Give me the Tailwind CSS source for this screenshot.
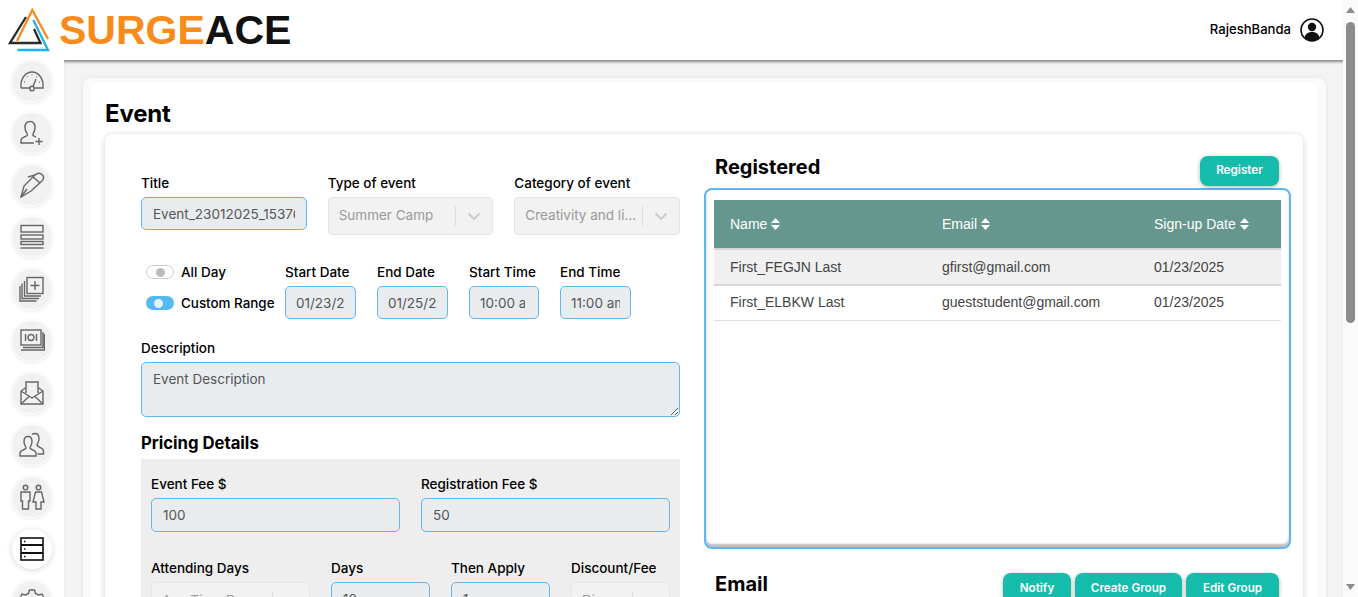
<!DOCTYPE html>
<html lang="en">
<head>
    <meta charset="UTF-8">
    <meta name="viewport" content="width=device-width, initial-scale=1.0">
    <title>Event</title>
    <script src="https://cdn.jsdelivr.net/npm/@tailwindcss/browser@4"></script>
</head>
<body class="h-[597px] overflow-hidden bg-white font-['Inter',sans-serif] text-black">
<div class="flex h-[597px]">
    <div class="flex w-[1343px] flex-col">
        <!-- Header -->
        <header class="flex h-[60px] shrink-0 items-center justify-between bg-white pl-[8px] pr-[19px]">
            <div class="flex items-center">
                <svg class="h-[44px] w-[51px]" viewBox="0 0 51 44" fill="none" stroke-width="2.3">
                    <path d="M18 9 L2 35 H32.5 L26 21" stroke="#2b2b2b"/>
                    <path d="M9 33 L24.3 2 L40 31" stroke="#f98b1a"/>
                    <path d="M25.3 12 L40 42 H9.5" stroke="#1fb1ee"/>
                </svg>
                <div class="font-['Liberation_Sans',sans-serif] text-[41px] font-bold leading-none"><span class="text-[#f98b1a]">SURGE</span><span class="text-[#111]">ACE</span></div>
            </div>
            <div class="flex items-center gap-[9px]">
                <span class="text-[13.1px] font-medium">RajeshBanda</span>
                <svg class="h-[24px] w-[24px]" viewBox="0 0 24 24">
                    <circle cx="12" cy="12" r="11" fill="#fff" stroke="#111" stroke-width="1.6"/>
                    <circle cx="12" cy="9" r="4.2" fill="#111"/>
                    <path d="M4.5 19.5 C5.5 15.5 8.5 14 12 14 C15.5 14 18.5 15.5 19.5 19.5 C17.5 21.8 15 23 12 23 C9 23 6.5 21.8 4.5 19.5Z" fill="#111"/>
                </svg>
            </div>
        </header>

        <div class="flex min-h-0 flex-1">
            <!-- Sidebar -->
            <nav class="flex w-[64px] shrink-0 flex-col items-center gap-[12px] bg-white pr-[1px] pt-[1px]">
                <a class="flex h-[40px] w-[40px] shrink-0 items-center justify-center rounded-full bg-[#f1f1f1] shadow-[0_0_0_1px_#fff,0_1px_4px_rgba(0,0,0,0.14)]">
                    <svg class="h-[26px] w-[26px]" viewBox="0 0 26 26" fill="none" stroke="#666" stroke-width="1.4"><path d="M2 20 C1 10 7 4 13 4 C19 4 25 10 24 20 H15.5 M10.5 20 H2"/><circle cx="13" cy="20.5" r="2.2"/><path d="M14 18.5 L17 11"/><path d="M5 14 h.8 M8 8.5 l.5.5 M13 6.5 v.8 M18 8.5 l-.5.5 M21 14 h-.8"/></svg>
                </a>
                <a class="flex h-[40px] w-[40px] shrink-0 items-center justify-center rounded-full bg-[#f1f1f1] shadow-[0_0_0_1px_#fff,0_1px_4px_rgba(0,0,0,0.14)]">
                    <svg class="h-[26px] w-[26px]" viewBox="0 0 26 26" fill="none" stroke="#666" stroke-width="1.4"><path d="M15 23 H2 V20 C2 17 8 16.5 8.5 15 C8.8 14 6 12 6 7.5 C6 3.5 8 1.5 11 1.5 C14 1.5 16 3.5 16 7.5 C16 12 13.5 14 13.8 15 C14 15.8 15.5 16.3 17 17"/><path d="M20 18 V25 M16.5 21.5 H23.5"/></svg>
                </a>
                <a class="flex h-[40px] w-[40px] shrink-0 items-center justify-center rounded-full bg-[#f1f1f1] shadow-[0_0_0_1px_#fff,0_1px_4px_rgba(0,0,0,0.14)]">
                    <svg class="h-[26px] w-[26px]" viewBox="0 0 26 26" fill="none" stroke="#666" stroke-width="1.4"><path d="M2 25 L5 14 L16 3 C18 1 21 1 23 2.5 C25 4.5 25 7 23 9 L12 19 Z"/><path d="M2 25 L8 17"/><path d="M14 5 L21 11"/><path d="M9 5 L16 3"/></svg>
                </a>
                <a class="flex h-[40px] w-[40px] shrink-0 items-center justify-center rounded-full bg-[#f1f1f1] shadow-[0_0_0_1px_#fff,0_1px_4px_rgba(0,0,0,0.14)]">
                    <svg class="h-[26px] w-[26px]" viewBox="0 0 26 26" fill="none" stroke="#666" stroke-width="1.4"><rect x="2" y="1.5" width="22" height="6.5"/><rect x="2" y="11" width="22" height="4"/><rect x="2" y="17.5" width="22" height="3"/><path d="M1.5 24 H24.5"/></svg>
                </a>
                <a class="flex h-[40px] w-[40px] shrink-0 items-center justify-center rounded-full bg-[#f1f1f1] shadow-[0_0_0_1px_#fff,0_1px_4px_rgba(0,0,0,0.14)]">
                    <svg class="h-[26px] w-[26px]" viewBox="0 0 26 26" fill="none" stroke="#666" stroke-width="1.4"><rect x="8" y="1.5" width="16" height="16"/><path d="M16 5 V14 M11.5 9.5 H20.5"/><path d="M5.5 5 V20 H22 M3 7.5 V22.5 H20 M1 10 V25 H17.5"/></svg>
                </a>
                <a class="flex h-[40px] w-[40px] shrink-0 items-center justify-center rounded-full bg-[#f1f1f1] shadow-[0_0_0_1px_#fff,0_1px_4px_rgba(0,0,0,0.14)]">
                    <svg class="h-[26px] w-[26px]" viewBox="0 0 26 26" fill="none" stroke="#666" stroke-width="1.4"><rect x="2" y="2" width="20" height="15"/><circle cx="12" cy="9.5" r="3"/><path d="M6.5 6 V13 M17.5 6 V13"/><path d="M24 4 V19.5 H4 M2 22 H25.5 V6"/></svg>
                </a>
                <a class="flex h-[40px] w-[40px] shrink-0 items-center justify-center rounded-full bg-[#f1f1f1] shadow-[0_0_0_1px_#fff,0_1px_4px_rgba(0,0,0,0.14)]">
                    <svg class="h-[26px] w-[26px]" viewBox="0 0 26 26" fill="none" stroke="#666" stroke-width="1.4"><path d="M2 11 V24 H24 V11 L19 7.5 M7 7.5 L2 11"/><path d="M7 13 V2 H19 V13"/><path d="M2 11 L13 18 L24 11 M2 24 L10 16.5 M24 24 L16 16.5"/></svg>
                </a>
                <a class="flex h-[40px] w-[40px] shrink-0 items-center justify-center rounded-full bg-[#f1f1f1] shadow-[0_0_0_1px_#fff,0_1px_4px_rgba(0,0,0,0.14)]">
                    <svg class="h-[26px] w-[26px]" viewBox="0 0 26 26" fill="none" stroke="#666" stroke-width="1.4"><path d="M17 24 H1 V21 C1 18 6.5 18 7 16 C7.2 15 5 13 5 9.5 C5 6 6.8 4.5 9 4.5 C11.2 4.5 13 6 13 9.5 C13 13 10.8 15 11 16 C11.5 18 17 18 17 21 Z"/><path d="M13 2.5 C14 1.5 15 1.5 16 1.5 C18.5 1.5 20 3.5 20 6.5 C20 10 18 12 18 13 C18.5 15.5 24.5 15.5 24.5 19 V22 H18.5"/></svg>
                </a>
                <a class="flex h-[40px] w-[40px] shrink-0 items-center justify-center rounded-full bg-[#f1f1f1] shadow-[0_0_0_1px_#fff,0_1px_4px_rgba(0,0,0,0.14)]">
                    <svg class="h-[26px] w-[26px]" viewBox="0 0 26 26" fill="none" stroke="#666" stroke-width="1.4"><circle cx="6.5" cy="3.5" r="2.3"/><circle cx="19.5" cy="3.5" r="2.3"/><path d="M2 8 H11 V17 H9.5 V25 H3.5 V17 H2 Z"/><path d="M16.5 8 H22.5 L25 18 H22 V25 H17 V18 H14 Z"/></svg>
                </a>
                <a class="flex h-[40px] w-[40px] shrink-0 items-center justify-center rounded-full bg-white shadow-[0_1px_6px_rgba(0,0,0,0.16)]">
                    <svg class="h-[26px] w-[26px]" viewBox="0 0 26 26" fill="none" stroke="#111" stroke-width="1.6"><rect x="2" y="2" width="22" height="22"/><path d="M2 9 H24 M2 17 H24" stroke-width="2.2"/><path d="M5 5.5 h1.5 M5 13 h1.5 M5 20.5 h1.5" stroke-width="1.4"/></svg>
                </a>
                <a class="flex h-[40px] w-[40px] shrink-0 items-center justify-center rounded-full bg-[#f1f1f1] shadow-[0_0_0_1px_#fff,0_1px_4px_rgba(0,0,0,0.14)]">
                    <svg class="h-[26px] w-[26px]" viewBox="0 0 26 26" fill="none" stroke="#666" stroke-width="1.4"><path d="M10.5 2 H15.5 L16.5 5.5 L19.5 7 L23 6 L25 10 L22.5 12.5 V14.5 L25 17 L23 21 L19.5 20 L16.5 21.5 L15.5 25 H10.5 L9.5 21.5 L6.5 20 L3 21 L1 17 L3.5 14.5 V12.5 L1 10 L3 6 L6.5 7 L9.5 5.5 Z"/><circle cx="13" cy="13.5" r="4"/></svg>
                </a>
            </nav>

            <!-- Main -->
            <main class="min-w-0 flex-1 overflow-hidden bg-[#f3f3f3] pl-[19px] pr-[17px] pt-[18px] shadow-[inset_0_4px_3px_-2px_rgba(0,0,0,0.45)]">
                <div class="rounded-t-lg bg-[#fafafa] pl-[8px] pr-[9px] pt-[5px] shadow-[0_0_4px_rgba(0,0,0,0.08)]">
                    <div class="bg-white px-[14px] pb-[40px]">
                        <h1 class="pt-[15px] text-[24px] font-bold leading-[32px] tracking-[-0.2px]">Event</h1>
                        <div class="mt-[4px] flex gap-[25px] rounded-lg bg-white pl-[36px] pr-[12px] shadow-[0_1px_6px_rgba(0,0,0,0.18)]">

                            <!-- Left column -->
                            <div class="w-[539px] shrink-0 pt-[39px]">
                                <div class="grid grid-cols-3 gap-x-[21px]">
                                    <div>
                                        <label class="mb-[4px] block text-[13.5px] font-medium leading-5">Title</label>
                                        <input readonly value="Event_23012025_153762" class="h-[33px] w-full rounded-[5px] border border-[#62b5ed] bg-[#e9ecef] px-[11px] text-[13.5px] text-[#555] outline-none">
                                    </div>
                                    <div>
                                        <label class="mb-[4px] block text-[13.5px] font-medium leading-5">Type of event</label>
                                        <div class="flex h-[38px] items-center rounded-[4px] border border-[#e6e6e6] bg-[#f2f2f2] text-[13.5px] text-[#999]">
                                            <span class="min-w-0 flex-1 truncate pb-[2px] pl-[10px]">Summer Camp</span>
                                            <span class="h-[20px] w-px bg-[#ddd]"></span>
                                            <svg class="mx-[10px] h-[16px] w-[16px] shrink-0" viewBox="0 0 16 16" fill="none" stroke="#ccc" stroke-width="2"><path d="M2.5 5.5 L8 11 L13.5 5.5"/></svg>
                                        </div>
                                    </div>
                                    <div>
                                        <label class="mb-[4px] block text-[13.5px] font-medium leading-5">Category of event</label>
                                        <div class="flex h-[38px] items-center rounded-[4px] border border-[#e6e6e6] bg-[#f2f2f2] text-[13.5px] text-[#999]">
                                            <span class="min-w-0 flex-1 truncate pb-[2px] pl-[10px] pr-[2px]">Creativity and life skills</span>
                                            <span class="h-[20px] w-px bg-[#ddd]"></span>
                                            <svg class="mx-[10px] h-[16px] w-[16px] shrink-0" viewBox="0 0 16 16" fill="none" stroke="#ccc" stroke-width="2"><path d="M2.5 5.5 L8 11 L13.5 5.5"/></svg>
                                        </div>
                                    </div>
                                </div>

                                <div class="mt-[27px] flex">
                                    <div class="w-[144px] shrink-0 pl-[5px]">
                                        <div class="flex h-[20px] items-center gap-[7px]">
                                            <span class="flex h-[14px] w-[28px] items-center justify-center rounded-full border border-[#ccc] bg-white pl-[1px]"><span class="h-[9px] w-[9px] rounded-full bg-[#bbb]"></span></span>
                                            <span class="text-[13.5px] font-medium">All Day</span>
                                        </div>
                                        <div class="mt-[11px] flex h-[20px] items-center gap-[7px]">
                                            <span class="flex h-[14px] w-[28px] items-center justify-center rounded-full bg-[#56b8f0] pr-[4px]"><span class="h-[9px] w-[9px] rounded-full bg-[#e4f3fd]"></span></span>
                                            <span class="text-[13.4px] font-medium">Custom Range</span>
                                        </div>
                                    </div>
                                    <div class="flex gap-[21px]">
                                        <div class="w-[71px]">
                                            <label class="mb-[4px] block whitespace-nowrap text-[13.5px] font-medium leading-5">Start Date</label>
                                            <input readonly value="01/23/2025" class="h-[33px] w-full rounded-[5px] border border-[#62b5ed] bg-[#e9ecef] px-[10px] text-[13.5px] text-[#555] outline-none">
                                        </div>
                                        <div class="w-[71px]">
                                            <label class="mb-[4px] block whitespace-nowrap text-[13.5px] font-medium leading-5">End Date</label>
                                            <input readonly value="01/25/2025" class="h-[33px] w-full rounded-[5px] border border-[#62b5ed] bg-[#e9ecef] px-[10px] text-[13.5px] text-[#555] outline-none">
                                        </div>
                                        <div class="w-[70px]">
                                            <label class="mb-[4px] block whitespace-nowrap text-[13.5px] font-medium leading-5">Start Time</label>
                                            <input readonly value="10:00 am" class="h-[33px] w-full rounded-[5px] border border-[#62b5ed] bg-[#e9ecef] pl-[10px] pr-[13px] text-[13.5px] text-[#555] outline-none">
                                        </div>
                                        <div class="w-[71px]">
                                            <label class="mb-[4px] block whitespace-nowrap text-[13.5px] font-medium leading-5">End Time</label>
                                            <input readonly value="11:00 am" class="h-[33px] w-full rounded-[5px] border border-[#62b5ed] bg-[#e9ecef] px-[10px] text-[13.5px] text-[#555] outline-none">
                                        </div>
                                    </div>
                                </div>

                                <label class="mb-[4px] mt-[19px] block text-[13.5px] font-medium leading-5">Description</label>
                                <textarea readonly class="block h-[55px] w-full rounded-[5px] border border-[#62b5ed] bg-[#e9ecef] px-[11px] py-[7px] text-[13.5px] leading-[18px] text-[#555] outline-none">Event Description</textarea>

                                <h3 class="mt-[14px] text-[16.7px] font-bold leading-6">Pricing Details</h3>
                                <div class="mt-[4px] bg-[#eeeeee] px-[10px] pb-[16px] pt-[15px]">
                                    <div class="grid grid-cols-2 gap-x-[21px]">
                                        <div>
                                            <label class="mb-[4px] block text-[13.5px] font-medium leading-5">Event Fee $</label>
                                            <input readonly value="100" class="h-[34px] w-full rounded-[5px] border border-[#62b5ed] bg-[#e9ecef] px-[11px] text-[13.5px] text-[#555] outline-none">
                                        </div>
                                        <div>
                                            <label class="mb-[4px] block text-[13.5px] font-medium leading-5">Registration Fee $</label>
                                            <input readonly value="50" class="h-[34px] w-full rounded-[5px] border border-[#62b5ed] bg-[#e9ecef] px-[11px] text-[13.5px] text-[#555] outline-none">
                                        </div>
                                    </div>
                                    <div class="mt-[26px] flex gap-[21px]">
                                        <div class="w-[159px]">
                                            <label class="mb-[4px] block text-[13.5px] font-medium leading-5">Attending Days</label>
                                            <div class="flex h-[38px] items-center rounded-[4px] border border-[#e6e6e6] bg-[#f2f2f2] text-[13.5px] text-[#999]">
                                                <span class="min-w-0 flex-1 truncate pb-[2px] pl-[10px]">Any Time Day</span>
                                                <span class="h-[20px] w-px bg-[#ddd]"></span>
                                                <svg class="mx-[10px] h-[16px] w-[16px] shrink-0" viewBox="0 0 16 16" fill="none" stroke="#ccc" stroke-width="2"><path d="M2.5 5.5 L8 11 L13.5 5.5"/></svg>
                                            </div>
                                        </div>
                                        <div class="w-[99px]">
                                            <label class="mb-[4px] block text-[13.5px] font-medium leading-5">Days</label>
                                            <input readonly value="10" class="h-[34px] w-full rounded-[5px] border border-[#62b5ed] bg-[#e9ecef] px-[11px] text-[13.5px] text-[#555] outline-none">
                                        </div>
                                        <div class="w-[99px]">
                                            <label class="mb-[4px] block text-[13.5px] font-medium leading-5">Then Apply</label>
                                            <input readonly value="1" class="h-[34px] w-full rounded-[5px] border border-[#62b5ed] bg-[#e9ecef] px-[11px] text-[13.5px] text-[#555] outline-none">
                                        </div>
                                        <div class="w-[99px]">
                                            <label class="mb-[4px] block whitespace-nowrap text-[13.5px] font-medium leading-5">Discount/Fee</label>
                                            <div class="flex h-[38px] items-center rounded-[4px] border border-[#e6e6e6] bg-[#f2f2f2] text-[13.5px] text-[#999]">
                                                <span class="min-w-0 flex-1 truncate pb-[2px] pl-[10px]">Disc</span>
                                                <span class="h-[20px] w-px bg-[#ddd]"></span>
                                                <svg class="mx-[10px] h-[16px] w-[16px] shrink-0" viewBox="0 0 16 16" fill="none" stroke="#ccc" stroke-width="2"><path d="M2.5 5.5 L8 11 L13.5 5.5"/></svg>
                                            </div>
                                        </div>
                                    </div>
                                </div>
                            </div>

                            <!-- Right column -->
                            <div class="w-[586px] shrink-0 pt-[19px]">
                                <div class="flex items-start justify-between pl-[10px] pr-[12px]">
                                    <h2 class="text-[20px] font-bold leading-7">Registered</h2>
                                    <button class="mt-[3px] h-[30px] w-[79px] rounded-lg bg-[#16bcab] text-[11.7px] font-semibold text-white shadow-[0_1px_4px_rgba(0,0,0,0.3)]">Register</button>
                                </div>
                                <div class="-ml-px mt-[2px] h-[361px] w-[587px] rounded-lg border-2 border-[#62b5ed] px-[8px] pt-[10px] shadow-[inset_0_-3px_2px_#bdbdbd]">
                                    <table class="w-[567px] table-fixed border-collapse font-['Liberation_Sans',sans-serif] text-[14px] text-[#444]">
                                        <thead>
                                            <tr class="h-[49px] border-b-2 border-[#d5d5d5] bg-[#66978e] text-left text-white">
                                                <th class="w-[212px] pl-[16px] font-normal">Name <svg class="inline h-[12px] w-[9px] align-[-1px]" viewBox="0 0 9 12" fill="#fff"><path d="M4.5 0 L9 5 H0 Z M4.5 12 L0 7 H9 Z"/></svg></th>
                                                <th class="w-[212px] pl-[16px] font-normal">Email <svg class="inline h-[12px] w-[9px] align-[-1px]" viewBox="0 0 9 12" fill="#fff"><path d="M4.5 0 L9 5 H0 Z M4.5 12 L0 7 H9 Z"/></svg></th>
                                                <th class="pl-[16px] font-normal">Sign-up Date <svg class="inline h-[12px] w-[9px] align-[-1px]" viewBox="0 0 9 12" fill="#fff"><path d="M4.5 0 L9 5 H0 Z M4.5 12 L0 7 H9 Z"/></svg></th>
                                            </tr>
                                        </thead>
                                        <tbody>
                                            <tr class="h-[36px] border-b-2 border-[#d8d8d8] bg-[#f0f0f0]">
                                                <td class="pl-[16px]">First_FEGJN Last</td>
                                                <td class="pl-[16px]">gfirst@gmail.com</td>
                                                <td class="pl-[16px]">01/23/2025</td>
                                            </tr>
                                            <tr class="h-[35px] border-b border-[#e0e0e0]">
                                                <td class="pl-[16px]">First_ELBKW Last</td>
                                                <td class="pl-[16px]">gueststudent@gmail.com</td>
                                                <td class="pl-[16px]">01/23/2025</td>
                                            </tr>
                                        </tbody>
                                    </table>
                                </div>
                                <div class="mt-[21px] flex items-start justify-between pl-[10px] pr-[12px]">
                                    <h2 class="text-[20px] font-bold leading-7">Email</h2>
                                    <div class="mt-[3px] flex gap-[4px]">
                                        <button class="h-[30px] w-[68px] rounded-lg bg-[#16bcab] pt-[1px] text-[11.7px] font-semibold text-white shadow-[0_1px_4px_rgba(0,0,0,0.3)]">Notify</button>
                                        <button class="h-[30px] w-[107px] rounded-lg bg-[#16bcab] pt-[1px] text-[11.7px] font-semibold text-white shadow-[0_1px_4px_rgba(0,0,0,0.3)]">Create Group</button>
                                        <button class="h-[30px] w-[93px] rounded-lg bg-[#16bcab] pt-[1px] text-[11.7px] font-semibold text-white shadow-[0_1px_4px_rgba(0,0,0,0.3)]">Edit Group</button>
                                    </div>
                                </div>
                            </div>
                        </div>
                    </div>
                </div>
            </main>
        </div>
    </div>

    <!-- Scrollbar -->
    <div class="flex w-[15px] shrink-0 flex-col items-center justify-between bg-[#fafafa]">
        <div class="flex w-full flex-col items-center">
            <svg class="mt-[7px] h-[6px] w-[9px]" viewBox="0 0 9 6" fill="#8c8c8c"><path d="M4.5 0 L9 6 H0 Z"/></svg>
            <div class="mt-[9px] h-[301px] w-[9px] rounded-full bg-[#8c8c8c]"></div>
        </div>
        <svg class="mb-[7px] h-[6px] w-[9px]" viewBox="0 0 9 6" fill="#8c8c8c"><path d="M0 0 H9 L4.5 6 Z"/></svg>
    </div>
</div>
</body>
</html>
